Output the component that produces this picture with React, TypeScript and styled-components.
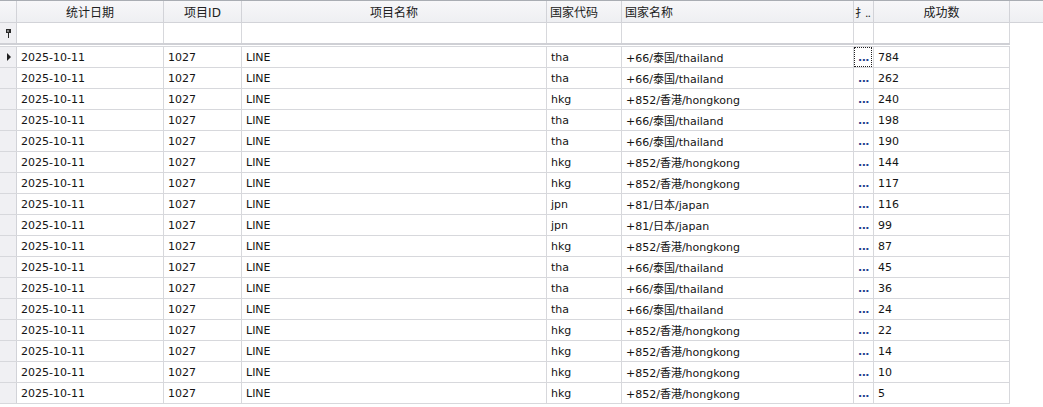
import styled, { createGlobalStyle } from 'styled-components';

const GlobalStyle = createGlobalStyle`
  html, body {
    margin: 0;
    padding: 0;
    background: #ffffff;
  }
  body {
    font-family: "DejaVu Sans", "Noto Sans CJK SC", sans-serif;
    font-size: 11px;
    color: #1a1a1a;
  }
`;

const COLUMNS = '17px 147px 78px 305px 75px 232px 20px 136px';

type Record = {
  date: string;
  projectId: string;
  projectName: string;
  code: string;
  country: string;
  count: number;
};

const countries: { [key: string]: string } = {
  tha: '+66/泰国/thailand',
  hkg: '+852/香港/hongkong',
  jpn: '+81/日本/japan',
};

const rows: Record[] = [
  ['tha', 784],
  ['tha', 262],
  ['hkg', 240],
  ['tha', 198],
  ['tha', 190],
  ['hkg', 144],
  ['hkg', 117],
  ['jpn', 116],
  ['jpn', 99],
  ['hkg', 87],
  ['tha', 45],
  ['tha', 36],
  ['tha', 24],
  ['hkg', 22],
  ['hkg', 14],
  ['hkg', 10],
  ['hkg', 5],
].map(([code, count]) => ({
  date: '2025-10-11',
  projectId: '1027',
  projectName: 'LINE',
  code: code as string,
  country: countries[code as string],
  count: count as number,
}));

const Grid = styled.div`
  width: 1043px;
  height: 407px;
  overflow: hidden;
  background: #ffffff;
`;

const HeaderBar = styled.div`
  display: flex;
  height: 23px;
  box-sizing: border-box;
  border-top: 1px solid #a9adb3;
  border-bottom: 1px solid #d2d3d8;
  background: linear-gradient(#f7f7f9, #eeeff2);
`;

const HeaderRow = styled.div`
  display: grid;
  grid-template-columns: ${COLUMNS};
`;

const HeaderCell = styled.div<{ $align?: 'left' | 'center'; $tight?: boolean }>`
  box-sizing: border-box;
  border-right: 1px solid #d2d3d8;
  padding: 0 ${(p) => (p.$tight ? '1px' : '3px')};
  display: flex;
  align-items: center;
  justify-content: ${(p) => (p.$align === 'left' ? 'flex-start' : 'center')};
  font-family: "DejaVu Sans", "Noto Sans CJK SC", sans-serif;
  font-size: ${(p) => (p.$tight ? '11px' : '12px')};
  letter-spacing: ${(p) => (p.$tight ? '-1px' : '0')};
  color: #202020;
  white-space: nowrap;
  overflow: hidden;
`;

const HeaderFiller = styled.div`
  flex: 1;
`;

const FilterRow = styled.div`
  display: grid;
  grid-template-columns: ${COLUMNS};
  height: 22px;
  width: 1010px;
  box-sizing: border-box;
  border-bottom: 2px solid #cfd0d5;
  margin-bottom: 1px;
`;

const IndicatorCell = styled.div`
  box-sizing: border-box;
  border-right: 1px solid #d2d3d8;
  background: #f0f0f3;
  display: flex;
  align-items: center;
  justify-content: center;
`;

const FilterCell = styled.div`
  box-sizing: border-box;
  border-right: 1px solid #d7d8dc;
`;

const Body = styled.div`
  width: 1010px;
  border-top: 1px solid #d7d8dc;
`;

const Row = styled.div`
  display: grid;
  grid-template-columns: ${COLUMNS};
  height: 21px;
  box-sizing: border-box;
  border-bottom: 1px solid #d7d8dc;
`;

const Cell = styled.div`
  box-sizing: border-box;
  border-right: 1px solid #d7d8dc;
  padding: 0 4px;
  display: flex;
  align-items: center;
  white-space: nowrap;
  overflow: hidden;
  color: #141414;
`;

const ButtonCell = styled.div<{ $focused?: boolean }>`
  box-sizing: border-box;
  border-right: 1px solid #d7d8dc;
  display: flex;
  align-items: center;
  justify-content: center;
  position: relative;
  color: #1f3f8f;
  font-size: 11px;
  font-weight: bold;
  letter-spacing: -0.5px;
  padding-top: 1px;

  &::after {
    content: '';
    display: ${(p) => (p.$focused ? 'block' : 'none')};
    position: absolute;
    inset: 0 1px 0 0;
    border: 1px dotted #202020;
  }
`;

const FilterPin = () => (
  <svg width="7" height="9" viewBox="0 0 7 9">
    <rect x="1" y="0" width="5" height="4" fill="#2a2a2a" />
    <rect x="2" y="1" width="2" height="2" fill="#8a8a8a" />
    <rect x="3" y="4" width="1" height="5" fill="#2a2a2a" />
  </svg>
);

const RowArrow = () => (
  <svg width="5" height="8" viewBox="0 0 5 8">
    <path d="M1 0 L5 4 L1 8 Z" fill="#202020" />
  </svg>
);

const App = () => {
  return (
    <Grid>
      <GlobalStyle />
      <HeaderBar>
        <HeaderRow>
          <HeaderCell />
          <HeaderCell>统计日期</HeaderCell>
          <HeaderCell>项目ID</HeaderCell>
          <HeaderCell>项目名称</HeaderCell>
          <HeaderCell $align="left">国家代码</HeaderCell>
          <HeaderCell $align="left">国家名称</HeaderCell>
          <HeaderCell $align="left" $tight>扌..</HeaderCell>
          <HeaderCell>成功数</HeaderCell>
        </HeaderRow>
        <HeaderFiller />
      </HeaderBar>
      <FilterRow>
        <IndicatorCell>
          <FilterPin />
        </IndicatorCell>
        {Array.from({ length: 7 }).map((_, i) => (
          <FilterCell key={i} />
        ))}
      </FilterRow>
      <Body>
        {rows.map((r, i) => (
          <Row key={i}>
            <IndicatorCell>{i === 0 && <RowArrow />}</IndicatorCell>
            <Cell>{r.date}</Cell>
            <Cell>{r.projectId}</Cell>
            <Cell>{r.projectName}</Cell>
            <Cell>{r.code}</Cell>
            <Cell>{r.country}</Cell>
            <ButtonCell $focused={i === 0}>...</ButtonCell>
            <Cell>{r.count}</Cell>
          </Row>
        ))}
      </Body>
    </Grid>
  );
};

export default App;
